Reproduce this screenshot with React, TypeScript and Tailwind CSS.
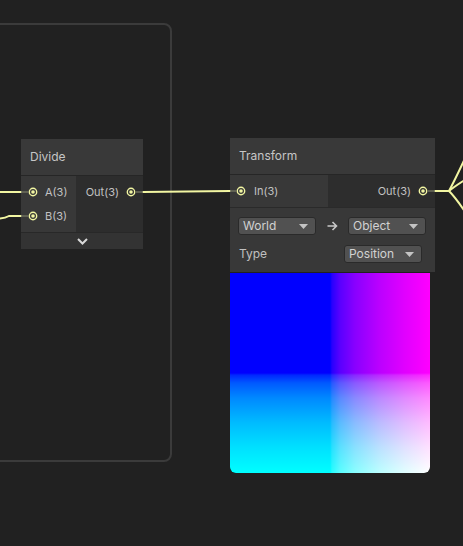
import React from "react";

const WIRE = "#f2f6a2";
const STUB = "#6e6f5c";

function Port() {
  return (
    <svg width="10" height="10" viewBox="0 0 10 10" className="shrink-0">
      <circle cx="5" cy="5" r="3.7" fill="none" stroke={WIRE} strokeWidth="1.4" />
      <circle cx="5" cy="5" r="1.8" fill={WIRE} />
    </svg>
  );
}

function Caret() {
  return (
    <svg width="9" height="5" viewBox="0 0 9 5" className="shrink-0">
      <path d="M0 0 H9 L4.5 5 Z" fill="#c4c4c4" />
    </svg>
  );
}

function Dropdown({ label, w }: { label: string; w: string }) {
  return (
    <div
      className={`${w} h-[18px] flex items-center justify-between pl-[4px] pr-[7px] bg-[#515151] border border-[#2a2a2a] rounded-[3px] text-[12px] text-[#d2d2d2]`}
    >
      <span>{label}</span>
      <Caret />
    </div>
  );
}

export default function App() {
  return (
    <div className="relative w-[463px] h-[546px] overflow-hidden bg-[#212121] font-['Inter','Noto_Sans',sans-serif]">
      {/* group box */}
      <div className="absolute left-[-20px] top-[23px] w-[192px] h-[439px] rounded-[8px] border-2 border-[#3b3b3b]" />

      {/* Divide node */}
      <div className="absolute left-[21px] top-[139px] w-[122px] flex flex-col">
        <div className="h-[37px] flex items-center px-[9px] bg-[#393939] border-b border-[#262626] text-[12px] text-[#c6c6c6]">
          Divide
        </div>
        <div className="flex h-[56px] text-[11px] text-[#c2c2c2]">
          <div className="w-[55px] bg-[#383838] pt-[4px] flex flex-col">
            <div className="h-[24px] flex items-center pl-[7px] gap-[7px]">
              <Port />
              <span>A(3)</span>
            </div>
            <div className="h-[24px] flex items-center pl-[7px] gap-[7px]">
              <Port />
              <span>B(3)</span>
            </div>
          </div>
          <div className="flex-1 bg-[#2d2d2d] pt-[4px]">
            <div className="h-[24px] flex items-center justify-end pr-[7px] gap-[7px]">
              <span>Out(3)</span>
              <Port />
            </div>
          </div>
        </div>
        <div className="h-[17px] bg-[#333333] border-t border-[#282828] flex items-center justify-center">
          <svg width="11" height="7" viewBox="0 0 11 7">
            <path d="M1 1 L5.5 5.5 L10 1" fill="none" stroke="#d8d8d8" strokeWidth="2" />
          </svg>
        </div>
      </div>

      {/* Transform node */}
      <div className="absolute left-[230px] top-[138px] w-[205px] flex flex-col">
        <div className="h-[37px] flex items-center px-[9px] bg-[#393939] border-b border-[#262626] text-[12px] text-[#c6c6c6]">
          Transform
        </div>
        <div className="flex h-[32px] text-[11px] text-[#c2c2c2]">
          <div className="w-[98px] bg-[#383838] flex items-center pl-[6px] gap-[8px]">
            <Port />
            <span>In(3)</span>
          </div>
          <div className="flex-1 bg-[#2d2d2d] flex items-center justify-end pr-[7px] gap-[7px]">
            <span>Out(3)</span>
            <Port />
          </div>
        </div>
        <div className="bg-[#383838] border-t border-[#2a2a2a] pt-[9px] pb-[9px] flex flex-col gap-[10px]">
          <div className="flex items-center pl-[8px]">
            <Dropdown label="World" w="w-[78px]" />
            <div className="w-[32px] flex items-center justify-center">
              <svg width="11" height="10" viewBox="0 0 11 10">
                <path d="M0.5 5 H9.5 M5.5 1 L9.5 5 L5.5 9" fill="none" stroke="#c8c8c8" strokeWidth="1.6" />
              </svg>
            </div>
            <Dropdown label="Object" w="w-[78px]" />
          </div>
          <div className="flex items-center justify-between pl-[9px] pr-[13px]">
            <span className="text-[12px] text-[#c0c0c0]">Type</span>
            <Dropdown label="Position" w="w-[78px]" />
          </div>
        </div>
        <div className="relative isolate w-[200px] h-[200px] mt-[1px] bg-[#0000ff] rounded-b-[6px] overflow-hidden">
          <div className="absolute inset-0 mix-blend-screen bg-[linear-gradient(to_right,#000000_50%,#270000_51%,#590000_55%,#890000_62.5%,#bc0000_75%,#e10000_87.5%,#ff0000_100%)]" />
          <div className="absolute inset-0 mix-blend-screen bg-[linear-gradient(to_bottom,#000000_50%,#002700_51%,#005900_55%,#008900_62.5%,#00bc00_75%,#00e100_87.5%,#00ff00_100%)]" />
        </div>
      </div>

      {/* wires */}
      <svg className="absolute left-0 top-0 pointer-events-none" width="463" height="546" viewBox="0 0 463 546">
        <g fill="none" strokeWidth="2" strokeLinecap="round">
          <path d="M-2 192 H21" stroke={WIRE} />
          <path d="M-2 218.5 Q5 218.5 9 216 H21" stroke={WIRE} />
          <path d="M143 192 L230 191" stroke={WIRE} />
          <path d="M435 191 H449" stroke={WIRE} />
          <path d="M449 191 Q455 180 468 152" stroke={WIRE} />
          <path d="M449 191 Q455 186 468 178" stroke={WIRE} />
          <path d="M449 191 Q456 198 468 216" stroke={WIRE} />
        </g>
        <g fill="none" strokeWidth="1.5">
          <path d="M21 192 H28" stroke={STUB} />
          <path d="M21 216 H28" stroke={STUB} />
          <path d="M136 192 H143" stroke={STUB} />
          <path d="M230 191 H236" stroke={STUB} />
          <path d="M428 191 H435" stroke={STUB} />
        </g>
      </svg>
    </div>
  );
}
